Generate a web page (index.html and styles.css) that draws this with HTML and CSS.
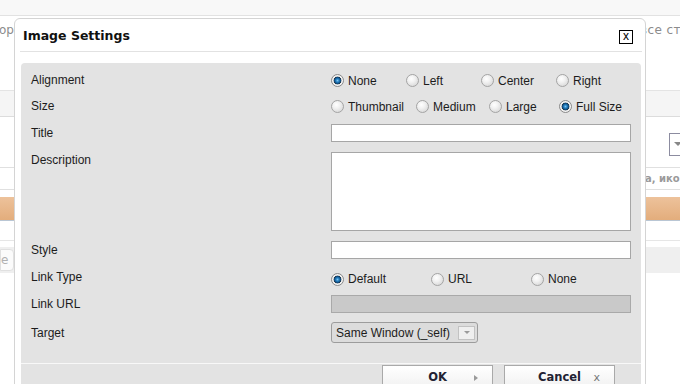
FILE: index.html
```html
<!DOCTYPE html>
<html lang="ru">
<head>
    <meta charset="UTF-8">
    <title>Image Settings</title>
    <link rel="stylesheet" href="styles.css">
</head>
<body>
    <!-- page behind the dialog -->
    <div class="page">
        <div class="topbar"></div>
        <div class="intro">
            <span class="intro-left">орт</span>
            <span class="intro-right">все ст</span>
        </div>
        <div class="tabs"></div>
        <div class="filters">
            <span class="filter-select"><span class="filter-arrow"></span></span>
        </div>
        <div class="columns">
            <span class="columns-left"></span>
            <span class="columns-right">на, ико</span>
        </div>
        <div class="spacer"></div>
        <div class="orange-bar"></div>
        <div class="spacer2"></div>
        <div class="search-band">
            <span class="search-box">e</span>
        </div>
    </div>

    <div class="dialog">
        <div class="dialog-header">
            <span class="dialog-title">Image Settings</span>
            <span class="dialog-close" title="Close">x</span>
        </div>

        <div class="panel">
            <div class="form">
                <div class="label">Alignment</div>
                <div class="radios radios-align">
                    <label class="radio"><span class="dot checked"></span>None</label>
                    <label class="radio"><span class="dot"></span>Left</label>
                    <label class="radio"><span class="dot"></span>Center</label>
                    <label class="radio"><span class="dot"></span>Right</label>
                </div>

                <div class="label">Size</div>
                <div class="radios radios-size">
                    <label class="radio"><span class="dot"></span>Thumbnail</label>
                    <label class="radio"><span class="dot"></span>Medium</label>
                    <label class="radio"><span class="dot"></span>Large</label>
                    <label class="radio"><span class="dot checked"></span>Full Size</label>
                </div>

                <div class="label">Title</div>
                <div class="field"></div>

                <div class="label label-top">Description</div>
                <div class="field field-area"></div>

                <div class="label">Style</div>
                <div class="field"></div>

                <div class="label">Link Type</div>
                <div class="radios radios-link">
                    <label class="radio"><span class="dot checked"></span>Default</label>
                    <label class="radio"><span class="dot"></span>URL</label>
                    <label class="radio"><span class="dot"></span>None</label>
                </div>

                <div class="label">Link URL</div>
                <div class="field field-disabled"></div>

                <div class="label">Target</div>
                <div>
                    <span class="select">
                        <span class="select-text">Same Window (_self)</span>
                        <span class="select-btn"><span class="select-arrow"></span></span>
                    </span>
                </div>
            </div>

            <div class="dialog-footer">
                <span class="button">OK<span class="btn-icon btn-ok"></span></span>
                <span class="button">Cancel<span class="btn-icon btn-x">x</span></span>
            </div>
        </div>
    </div>
</body>
</html>
```

FILE: styles.css
```css
body {
    margin: 0;
    font-family: "Liberation Sans", Arial, sans-serif;
    font-size: 12px;
    color: #1c1c1c;
    background: #fff;
    overflow: hidden;
}

/* background page */
.page {
    width: 680px;
}

.topbar {
    height: 15px;
    background: #f8f8f8;
    border-bottom: 1px solid #e2e2e2;
}

.intro {
    display: flex;
    height: 74px;
    font-family: "DejaVu Sans", sans-serif;
    font-size: 12px;
    color: #8c8c8c;
    padding-top: 7px;
    box-sizing: border-box;
}

.intro-left {
    flex: 0 0 641px;
    margin-left: -1px;
}

.intro-right {
    white-space: nowrap;
    letter-spacing: 0.4px;
}

.tabs {
    height: 25px;
    background: #f5f5f5;
    border-top: 1px solid #e4e4e4;
    border-bottom: 1px solid #dcdcdc;
}

.filters {
    height: 50px;
    display: flex;
    justify-content: flex-end;
    align-items: center;
}

.filter-select {
    width: 20px;
    height: 21px;
    border: 1px solid #8c8ca0;
    border-right: none;
    margin-right: -14px;
    margin-top: 4px;
    display: flex;
    align-items: center;
    padding-left: 4px;
}

.filter-arrow {
    width: 0;
    height: 0;
    border-left: 4px solid transparent;
    border-right: 4px solid transparent;
    border-top: 4px solid #888;
}

.columns {
    height: 21px;
    border-top: 1px solid #e0e0e0;
    border-bottom: 1px solid #e0e0e0;
    display: flex;
    align-items: center;
    font-family: "DejaVu Sans", sans-serif;
    font-weight: bold;
    font-size: 10px;
    color: #9a9a9a;
}

.columns-left {
    flex: 0 0 638px;
}

.columns-right {
    white-space: nowrap;
}

.spacer {
    height: 7px;
}

.orange-bar {
    height: 23px;
    background: linear-gradient(#edc29b, #e3ad7c);
    border-bottom: 1px solid #b9c6d4;
}

.spacer2 {
    height: 19px;
    border-bottom: 1px solid #e6e6e6;
}

.search-band {
    margin-top: 6px;
    height: 26px;
    background: #efefef;
    display: flex;
    align-items: center;
}

.search-box {
    width: 12px;
    height: 20px;
    background: #fbfbfb;
    border: 1px solid #e0e0e0;
    border-radius: 0 4px 4px 0;
    color: #b0b0b0;
    font-family: "DejaVu Sans", sans-serif;
    font-size: 12px;
    line-height: 20px;
    overflow: hidden;
}

/* dialog */
.dialog {
    position: absolute;
    left: 14px;
    top: 18px;
    width: 630px;
    height: 400px;
    background: #fff;
    border: 1px solid #d4d4d4;
    border-radius: 6px 6px 0 0;
}

.dialog-header {
    display: flex;
    justify-content: space-between;
    align-items: center;
    height: 32px;
    margin: 0 3px 0 5px;
    border-bottom: 1px solid #e2e2e2;
}

.dialog-title {
    font-family: "DejaVu Sans", sans-serif;
    font-weight: bold;
    font-size: 12.5px;
    color: #111;
    padding-left: 3px;
    padding-top: 1px;
}

.dialog-close {
    width: 12px;
    height: 12px;
    border: 1px solid #000;
    margin-right: 9px;
    margin-top: 3px;
    font-size: 12px;
    line-height: 10px;
    text-align: center;
    color: #000;
}

.panel {
    margin: 11px 4px 0 6px;
    background: #e3e3e3;
    border-radius: 4px 4px 0 0;
    padding-top: 9px;
    height: 340px;
}

.form {
    display: grid;
    grid-template-columns: 300px 300px;
    row-gap: 10px;
    padding: 0 10px;
    align-items: center;
}

.label {
    line-height: 14px;
}

.label-top {
    align-self: start;
    padding-top: 1px;
}

.radios {
    display: grid;
    height: 16px;
    align-items: center;
    padding-top: 1px;
    box-sizing: border-box;
}

.radios-align {
    grid-template-columns: 75px 75px 75px 75px;
}

.radios-size {
    grid-template-columns: 85px 73px 70px auto;
}

.radios-link {
    grid-template-columns: 100px 100px 100px;
    padding-top: 3px;
}

.radio {
    display: flex;
    align-items: center;
    white-space: nowrap;
}

.dot {
    width: 11px;
    height: 11px;
    border-radius: 50%;
    border: 1px solid #a4a4a4;
    margin-right: 4px;
    background: radial-gradient(circle at 40% 35%, #ffffff 0, #f2f2f2 35%, #cfcfcf 100%);
}

.dot.checked {
    border-color: #8a8a8a;
    background: radial-gradient(circle at 50% 50%, #7cc4f0 0, #2a84c4 1.5px, #0d4f85 3px, #20364a 3.6px, #e8e8e8 4.2px, #f4f4f4 5px, #cfcfcf 100%);
}

.field {
    height: 16px;
    background: #fff;
    border: 1px solid #a6a6a6;
}

.field-area {
    height: 77px;
}

.field-disabled {
    background: #c9c9c9;
    border-color: #a9a9a9;
}

.select {
    display: inline-flex;
    align-items: center;
    height: 19px;
    width: 141px;
    border: 1px solid #9c9c9c;
    border-radius: 3px;
    background: #dcdcdc;
    padding-left: 4px;
    margin-top: -1px;
}

.select-text {
    flex: 1;
    color: #1c1c1c;
}

.select-btn {
    width: 15px;
    height: 12px;
    margin-right: 2px;
    border: 1px solid #c2c2c2;
    background: #efefef;
    display: flex;
    justify-content: center;
    align-items: center;
}

.select-arrow {
    width: 0;
    height: 0;
    border-left: 3px solid transparent;
    border-right: 3px solid transparent;
    border-top: 3px solid #9a9a9a;
}

.dialog-footer {
    margin-top: 20px;
    border-top: 1px solid #f8f8f8;
    padding: 1px 26px 0 0;
    display: flex;
    justify-content: flex-end;
    gap: 11px;
}

.button {
    position: relative;
    width: 111px;
    height: 24px;
    border: 1px solid #a9a9a9;
    background: linear-gradient(#ffffff, #f1f1f1);
    display: flex;
    justify-content: center;
    align-items: flex-start;
    font-family: "DejaVu Sans", sans-serif;
    font-size: 11.5px;
    line-height: 11px;
    font-weight: bold;
    color: #223;
    padding-top: 6px;
    box-sizing: border-box;
}

.btn-icon {
    position: absolute;
    right: 14px;
}

.btn-ok {
    width: 0;
    height: 0;
    border-top: 3px solid transparent;
    border-bottom: 3px solid transparent;
    border-left: 4px solid #9a9a9a;
    top: 9px;
}

.btn-x {
    font-weight: normal;
    font-size: 11px;
    line-height: 10px;
    color: #777;
    top: 7px;
}
```
